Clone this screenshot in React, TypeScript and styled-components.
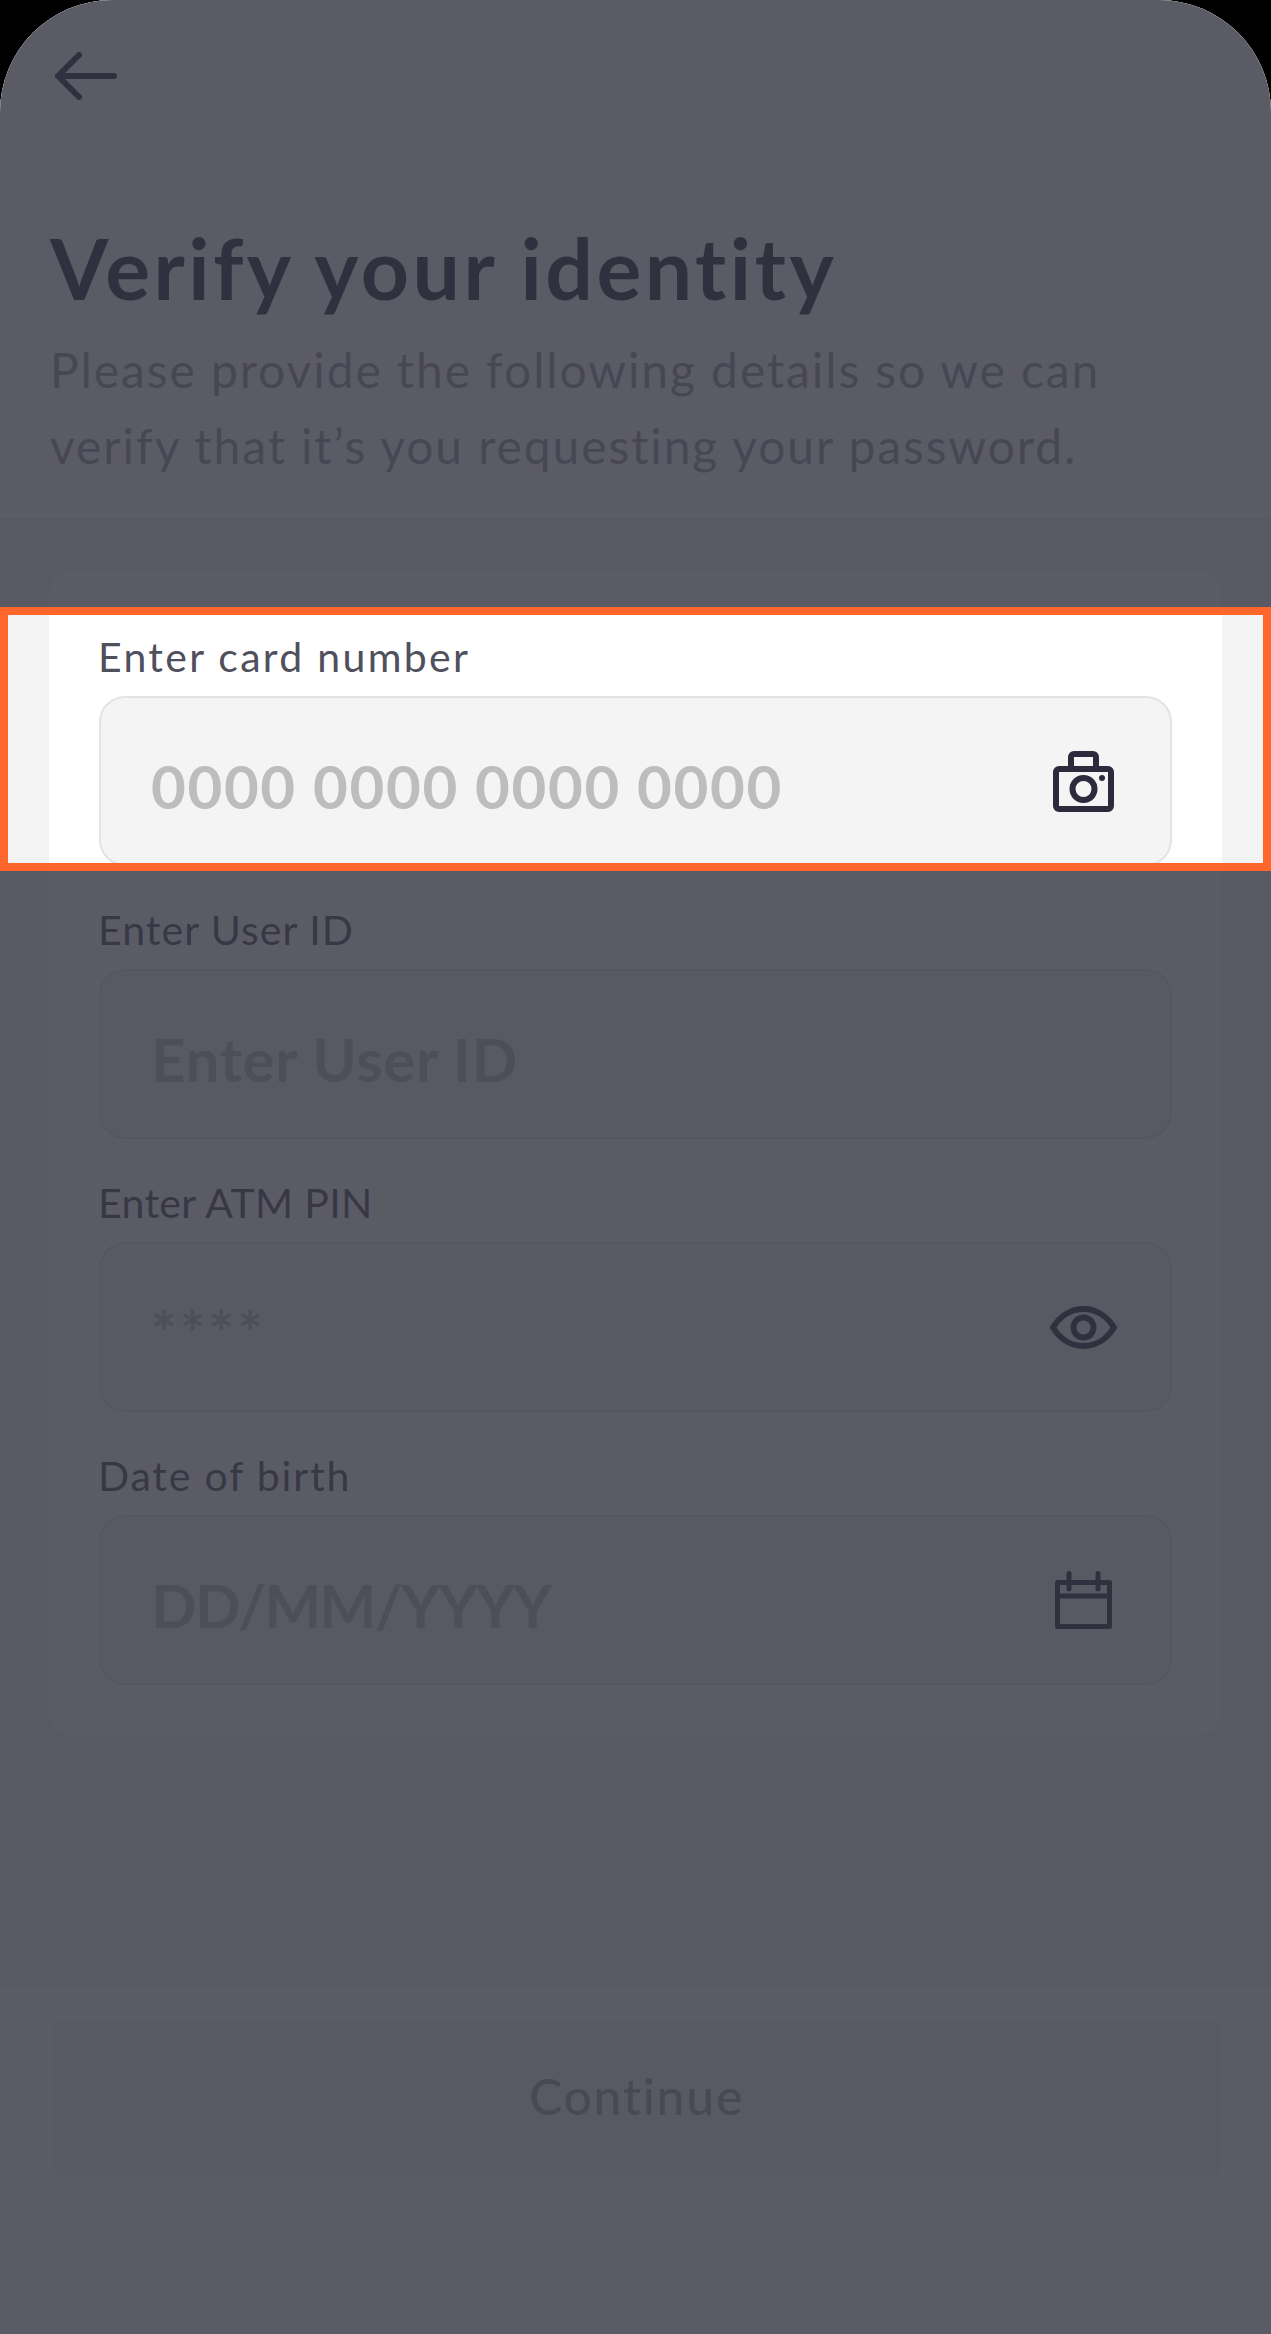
import React from "react";
import styled, { createGlobalStyle } from "styled-components";

const Global = createGlobalStyle`
  html, body { margin: 0; padding: 0; background: #000; }
  * { box-sizing: border-box; }
`;

const Page = styled.div`
  position: relative;
  width: 1271px;
  height: 2334px;
  display: flex;
  flex-direction: column;
  overflow: hidden;
  background: #f3f3f4;
  border-radius: 112px 112px 0 0;
  font-family: Lato, "Open Sans", sans-serif;
`;

const Header = styled.header`
  height: 520px;
  flex: none;
  padding: 52px 50px 0;
  background: #fff;
  border-bottom: 2px solid #eeeeef;
`;

const BackIcon = styled.svg`
  display: block;
  margin-left: 5px;
  width: 62px;
  height: 48px;
`;

const Title = styled.h1`
  margin: 118px 0 0;
  font-size: 84px;
  line-height: 100px;
  font-weight: 700;
  letter-spacing: 3.5px;
  color: #2b2b3d;
`;

const Subtitle = styled.p`
  margin: 14px 0 0;
  font-size: 48px;
  line-height: 76px;
  font-weight: 400;
  letter-spacing: 1.9px;
  color: #9c9ca6;
`;

const Main = styled.main`
  flex: 1;
  padding: 50px 49px 0;
`;

const Card = styled.section`
  height: 1165px;
  padding: 61px 50px 0;
  display: flex;
  flex-direction: column;
  gap: 38px;
  background: #fff;
  border-radius: 24px;
`;

const Field = styled.div`
  display: flex;
  flex-direction: column;
  gap: 13px;
`;

const Label = styled.label<{ $tracking: number }>`
  margin-left: -1px;
  font-size: 41px;
  line-height: 52px;
  letter-spacing: ${(p) => p.$tracking}px;
  color: #50505d;
`;

const InputBox = styled.div`
  height: 170px;
  display: flex;
  align-items: center;
  justify-content: space-between;
  padding: 0 53px 0 50px;
  background: #f4f4f4;
  border: 2px solid #e3e3e3;
  border-radius: 26px;
`;

const Placeholder = styled.span<{ $tracking: number }>`
  font-size: 60px;
  line-height: 70px;
  font-weight: 700;
  color: #bdbdbd;
  letter-spacing: ${(p) => p.$tracking}px;
  margin-top: 10px;
`;

const IconSlot = styled.span`
  flex: none;
  width: 67px;
  display: flex;
  justify-content: center;
`;

const FieldIcon = styled.svg`
  display: block;
`;

const Footer = styled.footer`
  height: 347px;
  flex: none;
  padding: 35px 51px 0 53px;
  background: #fff;
`;

const ContinueButton = styled.button`
  width: 100%;
  height: 153px;
  padding: 0 0 5px;
  border: 0;
  border-radius: 6px;
  background: #f2f2f3;
  font-family: inherit;
  font-size: 50px;
  font-weight: 500;
  letter-spacing: 1.7px;
  color: #a4a4ac;
`;

const Spotlight = styled.div`
  position: absolute;
  left: 0;
  top: 607px;
  width: 1271px;
  height: 264px;
  border: 8px solid #ff662b;
  box-shadow: 0 0 0 3000px rgba(50, 50, 64, 0.8);
`;

const ink = "#2b2b3d";

const Camera = () => (
  <FieldIcon width="61" height="61" viewBox="0 0 61 61" fill="none" stroke={ink} strokeWidth="6">
    <rect x="3" y="18" width="55" height="40" rx="3" />
    <path d="M18 18V6a3 3 0 0 1 3-3h19a3 3 0 0 1 3 3v12" />
    <circle cx="30.5" cy="38" r="11" />
    <circle cx="49" cy="27" r="3" fill={ink} stroke="none" />
  </FieldIcon>
);

const Eye = () => (
  <FieldIcon width="67" height="43" viewBox="0 0 67 43" fill="none" stroke={ink} strokeWidth="6">
    <path d="M3 21.5C10 10 21 3 33.5 3S57 10 64 21.5C57 33 46 40 33.5 40S10 33 3 21.5Z" strokeLinejoin="round" />
    <circle cx="33.5" cy="21.5" r="10" />
  </FieldIcon>
);

const Calendar = () => (
  <FieldIcon width="57" height="58" viewBox="0 0 57 58" fill="none" stroke={ink} strokeWidth="5" strokeLinecap="round">
    <rect x="2.5" y="11.5" width="52" height="44" strokeLinejoin="round" />
    <path d="M2.5 25H54.5" />
    <path d="M14 2.5V18M43 2.5V18" />
  </FieldIcon>
);

const fields = [
  { label: "Enter card number", labelTracking: 2.3, placeholder: "0000 0000 0000 0000", tracking: 1.65, icon: <Camera /> },
  { label: "Enter User ID", labelTracking: 1.05, placeholder: "Enter User ID", tracking: 0.7 },
  { label: "Enter ATM PIN", labelTracking: 0.35, placeholder: "****", tracking: 3.3, icon: <Eye /> },
  { label: "Date of birth", labelTracking: 1.8, placeholder: "DD/MM/YYYY", tracking: -1.6, icon: <Calendar /> },
];

export default function App() {
  return (
    <>
      <Global />
      <Page>
        <Header>
          <BackIcon viewBox="0 0 62 48" fill="none" stroke={ink} strokeWidth="6" strokeLinecap="round" strokeLinejoin="round">
            <path d="M59 24H3M24 3L3 24L24 45" />
          </BackIcon>
          <Title>Verify your identity</Title>
          <Subtitle>
            Please provide the following details so we can
            <br />
            verify that it’s you requesting your password.
          </Subtitle>
        </Header>
        <Main>
          <Card>
            {fields.map((f) => (
              <Field key={f.label}>
                <Label $tracking={f.labelTracking}>{f.label}</Label>
                <InputBox>
                  <Placeholder $tracking={f.tracking}>{f.placeholder}</Placeholder>
                  {f.icon && <IconSlot>{f.icon}</IconSlot>}
                </InputBox>
              </Field>
            ))}
          </Card>
        </Main>
        <Footer>
          <ContinueButton>Continue</ContinueButton>
        </Footer>
        <Spotlight />
      </Page>
    </>
  );
}
